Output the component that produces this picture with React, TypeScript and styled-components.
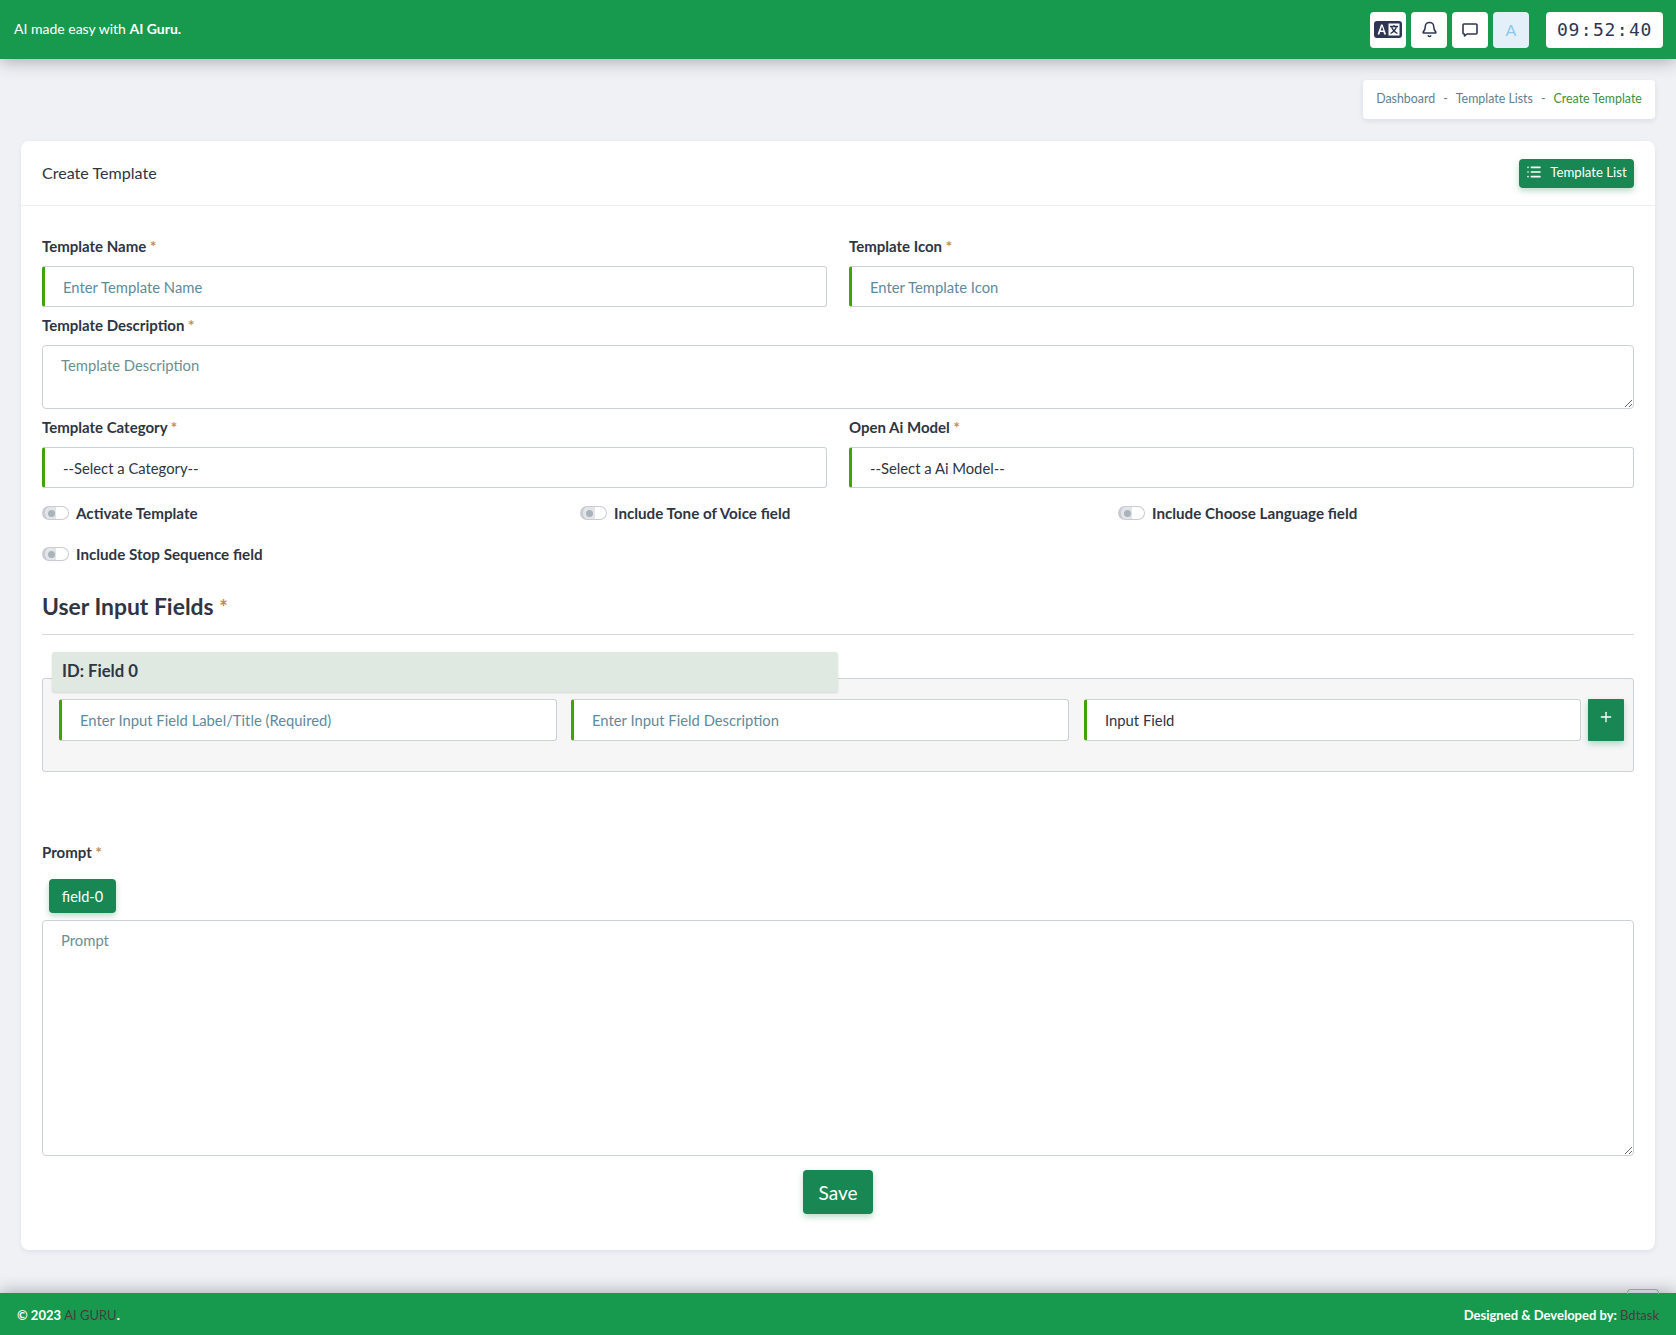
import React from "react";
import styled, { createGlobalStyle } from "styled-components";
import { Bell, List, Plus } from "lucide-react";

const FONT = `"Lato", "Noto Sans", sans-serif`;

const Global = createGlobalStyle`
  html, body { margin: 0; padding: 0; background: #f0f1f5; }
  body { font-family: ${FONT}; color: #2f3542; }
  * { box-sizing: border-box; }
`;

const Page = styled.div`
  display: flex;
  flex-direction: column;
  min-height: 100vh;
`;

const Header = styled.header`
  height: 59px;
  flex: none;
  background: #189a4e;
  display: flex;
  align-items: center;
  padding: 0 13px 0 14px;
  box-shadow: 0 2px 16px rgba(40, 45, 60, 0.38);
  position: relative;
  z-index: 2;
`;

const Tagline = styled.div`
  color: #fff;
  font-size: 14px;
  margin-right: auto;
  margin-top: -2px;
  b { font-weight: 700; }
`;

const IconButton = styled.div<{ $muted?: boolean }>`
  width: 36px;
  height: 36px;
  border-radius: 4px;
  background: ${(p) => (p.$muted ? "#e3f0f9" : "#fff")};
  color: #8cc8ee;
  display: flex;
  align-items: center;
  justify-content: center;
  font-size: 16px;
  margin-left: 5px;
  &:first-of-type { margin-left: 0; }
`;

const Clock = styled.div`
  width: 117px;
  height: 36px;
  margin-left: 17px;
  background: #fff;
  border-radius: 4px;
  color: #2f3653;
  display: flex;
  align-items: center;
  justify-content: center;
  gap: 5px;
  font-family: "DejaVu Sans Mono", "Liberation Mono", monospace;
  font-size: 18px;
  letter-spacing: 0.7px;
`;

const ClockColon = styled.span`
  width: 3px;
  display: flex;
  justify-content: center;
`;

const Main = styled.main`
  flex: 1;
  padding: 21px 21px 43px 21px;
`;

const CrumbRow = styled.div`
  display: flex;
  justify-content: flex-end;
  margin-bottom: 22px;
`;

const Crumbs = styled.div`
  width: 292px;
  height: 39px;
  background: #fff;
  border-radius: 4px;
  box-shadow: 0 2px 5px rgba(50, 60, 90, 0.1);
  display: flex;
  align-items: center;
  justify-content: center;
  gap: 8px;
  font-size: 12.4px;
  padding-bottom: 2px;
  color: #5f7f8f;
`;

const CrumbActive = styled.span`
  color: #3f8f3a;
`;

const Card = styled.section`
  background: #fff;
  border-radius: 8px;
  box-shadow: 0 2px 5px rgba(50, 60, 90, 0.08);
`;

const CardHead = styled.div`
  height: 65px;
  border-bottom: 1px solid #eff0f3;
  display: flex;
  align-items: center;
  justify-content: space-between;
  padding: 0 21px 0 21px;
`;

const CardTitle = styled.div`
  font-size: 16.1px;
  color: #2f3542;
  margin-top: -1px;
`;

const GreenButton = styled.button`
  border: 0;
  background: #198754;
  color: #fff;
  font-family: ${FONT};
  border-radius: 4px;
  box-shadow: 0 3px 6px rgba(25, 135, 84, 0.3);
  display: inline-flex;
  align-items: center;
  justify-content: center;
`;

const ListButton = styled(GreenButton)`
  width: 115px;
  height: 29px;
  font-size: 13.2px;
  gap: 8px;
  padding: 0 0 2px 0;
`;

const CardBody = styled.div`
  padding: 31px 21px 36px 21px;
`;

const Label = styled.label`
  display: block;
  font-weight: 700;
  font-size: 15px;
  line-height: 18px;
  height: 18px;
  color: #2f3542;
  margin-bottom: 11px;
`;

const Star = styled.span`
  color: #c08a58;
  font-weight: 700;
`;

const TwoCols = styled.div`
  display: grid;
  grid-template-columns: 785px 785px;
  justify-content: space-between;
  column-gap: 22px;
`;

const Accent = styled.input`
  display: block;
  width: 100%;
  height: 41px;
  border: 1px solid #ccd0d8;
  border-left: 3px solid #3fa40a;
  border-radius: 3px;
  background: #fff;
  padding: 0 0 0 18px;
  font-family: ${FONT};
  font-size: 14.8px;
  color: #2f3542;
  outline: none;
  appearance: none;
  &::placeholder { color: #5f8a9c; opacity: 1; }
`;

const Field = styled.div`
  min-width: 0;
`;

const Spaced = styled.div`
  margin-top: 9px;
`;

const Area = styled.textarea<{ $h: number }>`
  display: block;
  width: 100%;
  height: ${(p) => p.$h}px;
  border: 1px solid #ccd0d8;
  border-radius: 4px;
  padding: 10px 18px;
  font-family: ${FONT};
  font-size: 14.8px;
  outline: none;
  &::placeholder { color: #6b8f90; opacity: 1; }
`;

const Toggles = styled.div`
  display: grid;
  grid-template-columns: repeat(3, 518px);
  column-gap: 20px;
  margin-top: 15px;
  row-gap: 21px;
`;

const ToggleItem = styled.div`
  height: 20px;
  display: flex;
  align-items: center;
  gap: 7px;
  font-size: 15.2px;
  font-weight: 700;
`;

const Track = styled.span`
  width: 27px;
  height: 14px;
  border: 1px solid #c9ccd3;
  border-left-width: 3px;
  border-radius: 7px;
  background: linear-gradient(90deg, #e4e5e9 50%, #fff 50%);
  display: flex;
  align-items: center;
  padding-left: 3px;
`;

const Knob = styled.span`
  width: 7px;
  height: 7px;
  border-radius: 50%;
  background: #a9b3ba;
`;

const SectionTitle = styled.h2`
  font-size: 22.9px;
  line-height: 28px;
  font-weight: 700;
  margin: 27px 0 0;
  padding-top: 1px;
  border-bottom: 1px solid #d6d8dc;
  color: #2f3542;
  height: 44px;
`;

const TitleStar = styled(Star)`
  font-size: 20px;
`;

const IdBar = styled.div`
  position: relative;
  z-index: 1;
  width: 786px;
  height: 40px;
  margin: 17px 0 -14px 10px;
  padding-left: 10px;
  background: #dfe8e1;
  border-radius: 3px;
  box-shadow: 0 1px 2px rgba(50, 60, 90, 0.18);
  font-size: 16.7px;
  font-weight: 700;
  line-height: 38px;
`;

const FieldBox = styled.div`
  height: 94px;
  background: #f6f6f7;
  border: 1px solid #ccd0d8;
  border-radius: 3px;
  padding: 20px 9px 0 16px;
  display: flex;
  align-items: flex-start;
`;

const FieldInput = styled(Accent)<{ $w: number; $gap: number }>`
  width: ${(p) => p.$w}px;
  margin-right: ${(p) => p.$gap}px;
  flex: none;
  height: 42px;
`;

const PlusButton = styled(GreenButton)`
  width: 36px;
  height: 42px;
  flex: none;
  border-radius: 1px;
  padding: 0 0 6px 0;
`;

const PromptLabel = styled(Label)`
  margin-top: 71px;
  margin-bottom: 0;
`;

const Chip = styled(GreenButton)`
  display: flex;
  width: 67px;
  height: 34px;
  margin: 18px 0 7px 7px;
  padding: 0;
  font-size: 14.5px;
`;

const SaveRow = styled.div`
  display: flex;
  justify-content: center;
  margin-top: 14px;
`;

const SaveButton = styled(GreenButton)`
  width: 70px;
  height: 44px;
  font-size: 19px;
`;

const Footer = styled.footer`
  height: 43px;
  flex: none;
  background: #189a4e;
  color: #fff;
  font-size: 13px;
  font-weight: 700;
  display: flex;
  align-items: center;
  justify-content: space-between;
  padding: 0 17px;
  position: relative;
  box-shadow: 0 -2px 16px rgba(40, 45, 60, 0.34);
`;

const DarkLink = styled.span`
  color: #4c3a40;
  font-weight: 400;
`;

const TopTab = styled.span`
  position: absolute;
  right: 17px;
  top: -4px;
  width: 32px;
  height: 5px;
  border: 1px solid #6fb892;
  border-bottom: 0;
  border-radius: 4px 4px 0 0;
`;

const TranslateIcon = () => (
  <svg width="28" height="18" viewBox="0 0 28 18" aria-hidden="true">
    <rect x="0" y="0" width="28" height="17" rx="3" fill="#2f3653" />
    <path d="M3.5 13.5 7 3.5h1.6l3.5 10h-1.9l-.8-2.5H6.2l-.8 2.5zM6.7 9.5h2.7L8 5.4z" fill="#fff" />
    <rect x="14.5" y="2.5" width="11" height="12" fill="#fff" />
    <path d="M16 5.5h8M20 4v1.5M17.5 5.5c.8 3 3 5.5 6 7M22.5 5.5c-.8 3-3 5.5-6 7" stroke="#2f3653" strokeWidth="1.3" fill="none" />
  </svg>
);

const ChatIcon = () => (
  <svg width="16" height="14" viewBox="0 0 16 14" aria-hidden="true">
    <path d="M2 1h12a1 1 0 0 1 1 1v8a1 1 0 0 1-1 1H5l-2.5 2v-2H2a1 1 0 0 1-1-1V2a1 1 0 0 1 1-1z" fill="none" stroke="#2f3653" strokeWidth="1.6" strokeLinejoin="round" />
  </svg>
);

const Req = () => <Star>*</Star>;

export default function App() {
  return (
    <Page>
      <Global />
      <Header>
        <Tagline>AI made easy with <b>AI Guru.</b></Tagline>
        <IconButton><TranslateIcon /></IconButton>
        <IconButton><Bell size={17} color="#2f3653" strokeWidth={2.2} /></IconButton>
        <IconButton><ChatIcon /></IconButton>
        <IconButton $muted>A</IconButton>
        <Clock>
          <span>09</span><ClockColon>:</ClockColon><span>52</span><ClockColon>:</ClockColon><span>40</span>
        </Clock>
      </Header>
      <Main>
        <CrumbRow>
          <Crumbs>
            <span>Dashboard</span><span>-</span><span>Template Lists</span><span>-</span>
            <CrumbActive>Create Template</CrumbActive>
          </Crumbs>
        </CrumbRow>
        <Card>
          <CardHead>
            <CardTitle>Create Template</CardTitle>
            <ListButton><List size={16} strokeWidth={2.4} />Template List</ListButton>
          </CardHead>
          <CardBody>
            <TwoCols>
              <Field>
                <Label>Template Name <Req /></Label>
                <Accent placeholder="Enter Template Name" />
              </Field>
              <Field>
                <Label>Template Icon <Req /></Label>
                <Accent placeholder="Enter Template Icon" />
              </Field>
            </TwoCols>
            <Spaced>
              <Label>Template Description <Req /></Label>
              <Area $h={64} placeholder="Template Description" />
            </Spaced>
            <Spaced>
              <TwoCols>
                <Field>
                  <Label>Template Category <Req /></Label>
                  <Accent as="select"><option>--Select a Category--</option></Accent>
                </Field>
                <Field>
                  <Label>Open Ai Model <Req /></Label>
                  <Accent as="select"><option>--Select a Ai Model--</option></Accent>
                </Field>
              </TwoCols>
            </Spaced>
            <Toggles>
              <ToggleItem><Track><Knob /></Track>Activate Template</ToggleItem>
              <ToggleItem><Track><Knob /></Track>Include Tone of Voice field</ToggleItem>
              <ToggleItem><Track><Knob /></Track>Include Choose Language field</ToggleItem>
              <ToggleItem><Track><Knob /></Track>Include Stop Sequence field</ToggleItem>
            </Toggles>
            <SectionTitle>User Input Fields <TitleStar>*</TitleStar></SectionTitle>
            <IdBar>ID: Field 0</IdBar>
            <FieldBox>
              <FieldInput $w={498} $gap={14} placeholder="Enter Input Field Label/Title (Required)" />
              <FieldInput $w={498} $gap={15} placeholder="Enter Input Field Description" />
              <FieldInput $w={497} $gap={7} as="select"><option>Input Field</option></FieldInput>
              <PlusButton><Plus size={16} /></PlusButton>
            </FieldBox>
            <PromptLabel>Prompt <Req /></PromptLabel>
            <Chip>field-0</Chip>
            <Area $h={236} placeholder="Prompt" />
            <SaveRow><SaveButton>Save</SaveButton></SaveRow>
          </CardBody>
        </Card>
      </Main>
      <Footer>
        <TopTab />
        <span>© 2023 <DarkLink>AI GURU</DarkLink>.</span>
        <span>Designed &amp; Developed by: <DarkLink>Bdtask</DarkLink></span>
      </Footer>
    </Page>
  );
}
